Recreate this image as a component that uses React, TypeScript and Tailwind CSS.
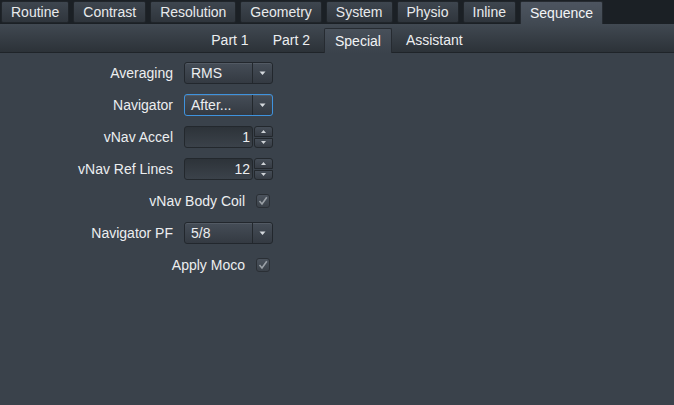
import React from "react";

const font = { fontFamily: '"Liberation Sans", Arial, sans-serif' };

const topTabs = ["Routine", "Contrast", "Resolution", "Geometry", "System", "Physio", "Inline", "Sequence"];
const subTabs = ["Part 1", "Part 2", "Special", "Assistant"];

function Arrow() {
  return (
    <svg width="7" height="5" viewBox="0 0 7 5">
      <path d="M0.5 0.5 H6.5 L3.5 4 Z" fill="#d4d8dc" />
    </svg>
  );
}

function Dropdown({ value, focused }: { value: string; focused?: boolean }) {
  return (
    <div
      className={`flex h-[22px] w-[89px] items-stretch rounded-[3px] border bg-gradient-to-b from-[#454d57] to-[#343a42] shadow-[inset_0_1px_0_rgba(255,255,255,0.08)] ${
        focused ? "border-[#3f93de]" : "border-[#22272d]"
      }`}
    >
      <div className="flex flex-1 items-center pl-[6px] text-[14px] text-[#eceef0]">{value}</div>
      <div className="flex w-[20px] items-center justify-center border-l border-[#23282d]">
        <Arrow />
      </div>
    </div>
  );
}

function Spin({ value }: { value: string }) {
  return (
    <div className="flex h-[22px] w-[89px] items-stretch gap-[1px]">
      <div className="flex w-[69px] items-center justify-end rounded-[3px] border border-[#23282d] bg-gradient-to-b from-[#2d3339] to-[#3b424a] pr-[2px] text-[14px] text-[#eceef0]">
        {value}
      </div>
      <div className="flex flex-1 flex-col gap-[1px]">
        <div className="flex flex-1 items-center justify-center rounded-t-[3px] border border-[#23282d] bg-gradient-to-b from-[#454d57] to-[#363c44]">
          <svg width="5" height="3" viewBox="0 0 5 3">
            <path d="M0 3 H5 L2.5 0 Z" fill="#cfd3d7" />
          </svg>
        </div>
        <div className="flex flex-1 items-center justify-center rounded-b-[3px] border border-[#23282d] bg-gradient-to-b from-[#454d57] to-[#363c44]">
          <svg width="5" height="3" viewBox="0 0 5 3">
            <path d="M0 0 H5 L2.5 3 Z" fill="#cfd3d7" />
          </svg>
        </div>
      </div>
    </div>
  );
}

function Check() {
  return (
    <div className="flex h-[14px] w-[14px] items-center justify-center rounded-[3px] border border-[#2a2f35] bg-gradient-to-b from-[#4a525c] to-[#3a4149]">
      <svg width="10" height="10" viewBox="0 0 10 10">
        <path d="M1.5 5 L4 8 L8.8 1.2" stroke="#9aa0a6" strokeWidth="1.6" fill="none" />
      </svg>
    </div>
  );
}

function Row({ label, children }: { label: string; children: React.ReactNode }) {
  return (
    <div className="flex h-[22px] w-[273px] items-center justify-end">
      <span className="text-[14px] text-[#eceef0]">{label}</span>
      <div className="ml-[11px]">{children}</div>
    </div>
  );
}

function CheckRow({ label }: { label: string }) {
  return (
    <div className="flex h-[22px] w-[273px] items-center justify-end">
      <span className="text-[14px] text-[#eceef0]">{label}</span>
      <div className="ml-[11px] mr-[3px]">
        <Check />
      </div>
    </div>
  );
}

export default function App() {
  return (
    <div style={font} className="flex h-[405px] w-[674px] flex-col overflow-hidden bg-[#3a424b]">
      <div className="flex h-[24px] items-end gap-[4px] bg-[#1b2025] pl-[1px]">
        {topTabs.map((t) => {
          const active = t === "Sequence";
          return (
            <div
              key={t}
              className={`flex items-center px-[9px] text-[14px] ${
                active
                  ? "h-[23px] rounded-t-[2px] border border-b-0 border-[#262b31] bg-gradient-to-b from-[#4d5560] to-[#414952] text-[#f2f4f6]"
                  : "mb-[1px] h-[22px] rounded-[2px] border border-[#20252a] bg-gradient-to-b from-[#3e464f] to-[#2f353c] text-[#e8eaec]"
              }`}
            >
              {t}
            </div>
          );
        })}
      </div>
      <div className="flex h-[29px] items-end justify-center border-b border-[#1f2429] bg-gradient-to-b from-[#414952] to-[#2c3238]">
        {subTabs.map((t) => {
          const active = t === "Special";
          return (
            <div
              key={t}
              className={`flex items-center text-[14px] ${
                active
                  ? "relative -mb-[1px] mx-[2px] h-[25px] rounded-t-[2px] border border-b-0 border-[#262b31] bg-gradient-to-b from-[#48505a] to-[#3a424b] px-[10px] text-[#f2f4f6]"
                  : "h-[24px] px-[12px] text-[#eceef0]"
              }`}
            >
              {t}
            </div>
          );
        })}
      </div>
      <div className="flex flex-col gap-[10px] pt-[9px]">
        <Row label="Averaging">
          <Dropdown value="RMS" />
        </Row>
        <Row label="Navigator">
          <Dropdown value="After..." focused />
        </Row>
        <Row label="vNav Accel">
          <Spin value="1" />
        </Row>
        <Row label="vNav Ref Lines">
          <Spin value="12" />
        </Row>
        <CheckRow label="vNav Body Coil" />
        <Row label="Navigator PF">
          <Dropdown value="5/8" />
        </Row>
        <CheckRow label="Apply Moco" />
      </div>
    </div>
  );
}
